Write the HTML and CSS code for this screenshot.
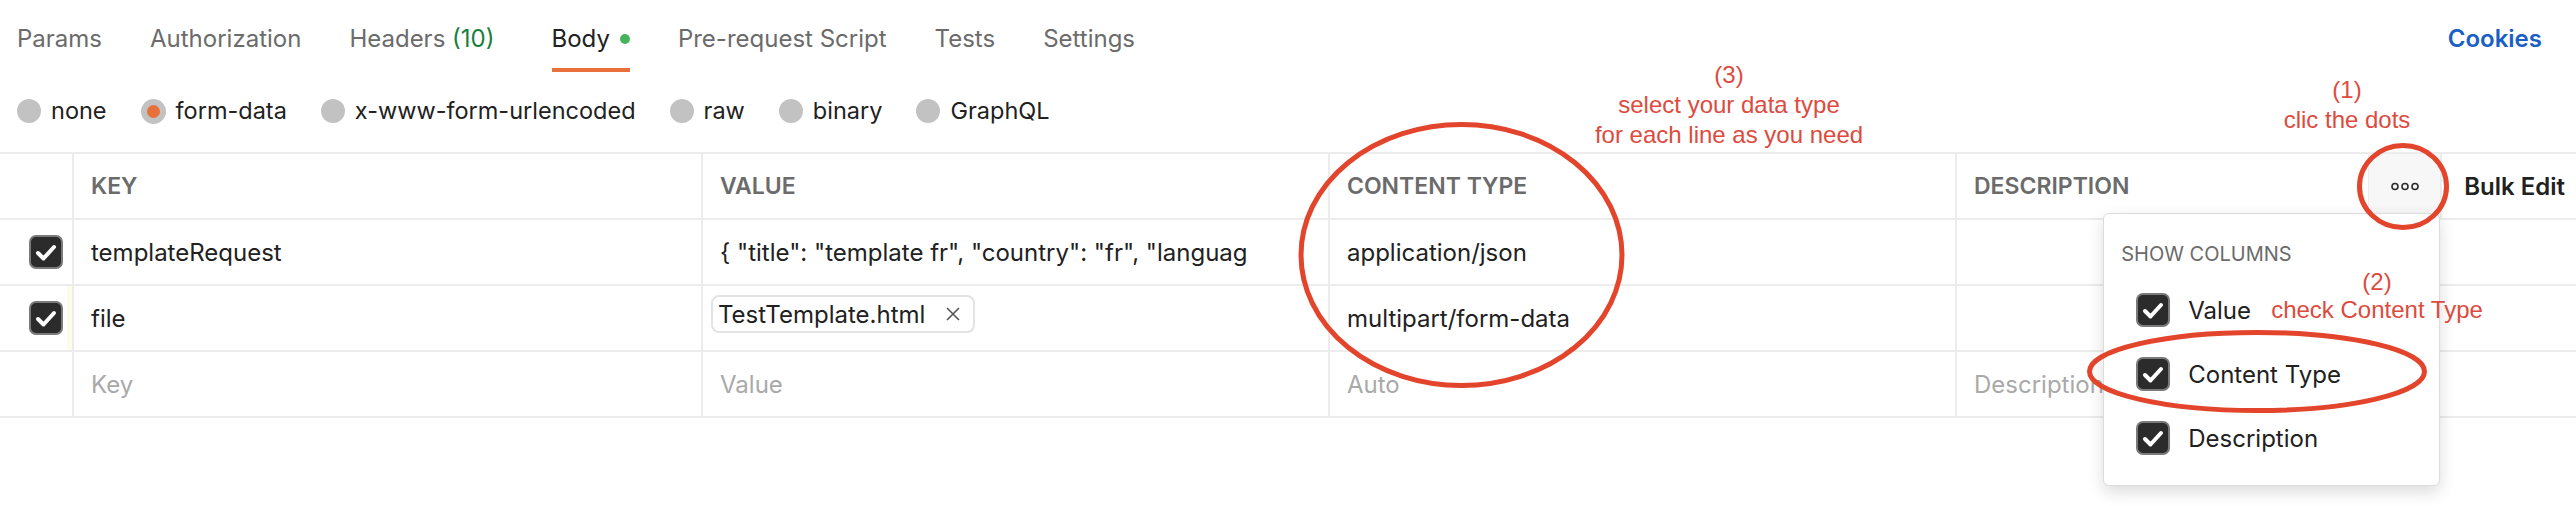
FILE: index.html
```html
<!DOCTYPE html>
<html>
<head>
  <meta charset="utf-8">
  <link rel="stylesheet" href="styles.css">
</head>
<body>
  <div class="pane">
    <div class="tabs">
      <div class="tab-list">
        <div class="tab">Params</div>
        <div class="tab">Authorization</div>
        <div class="tab">Headers <span class="count">(10)</span></div>
        <div class="tab active">Body<span class="dot"></span></div>
        <div class="tab">Pre-request Script</div>
        <div class="tab">Tests</div>
        <div class="tab">Settings</div>
      </div>
      <div class="cookies">Cookies</div>
    </div>

    <div class="body-types">
      <label class="radio"><span class="radio-mark"></span>none</label>
      <label class="radio"><span class="radio-mark checked"></span>form-data</label>
      <label class="radio"><span class="radio-mark"></span>x-www-form-urlencoded</label>
      <label class="radio"><span class="radio-mark"></span>raw</label>
      <label class="radio"><span class="radio-mark"></span>binary</label>
      <label class="radio"><span class="radio-mark"></span>GraphQL</label>
    </div>

    <div class="kv-table">
      <div class="kv-row kv-head">
        <div class="cell cell-check"></div>
        <div class="cell">KEY</div>
        <div class="cell">VALUE</div>
        <div class="cell">CONTENT TYPE</div>
        <div class="cell cell-desc">
          <span class="desc-label">DESCRIPTION</span>
          <div class="more-btn">
            <svg width="28" height="9" viewBox="0 0 28 9">
              <circle cx="4" cy="4.5" r="3" fill="none" stroke="#2b2b2b" stroke-width="1.6"/>
              <circle cx="14" cy="4.5" r="3" fill="none" stroke="#2b2b2b" stroke-width="1.6"/>
              <circle cx="24" cy="4.5" r="3" fill="none" stroke="#2b2b2b" stroke-width="1.6"/>
            </svg>
            <div class="col-menu">
              <div class="menu-title">SHOW COLUMNS</div>
              <div class="menu-item">
                <span class="check"><svg width="30" height="30" viewBox="0 0 30 30"><path d="M7 16 L12.5 21.5 L23 10" fill="none" stroke="#fff" stroke-width="4" stroke-linecap="round" stroke-linejoin="round"/></svg></span>
                Value
              </div>
              <div class="menu-item">
                <span class="check"><svg width="30" height="30" viewBox="0 0 30 30"><path d="M7 16 L12.5 21.5 L23 10" fill="none" stroke="#fff" stroke-width="4" stroke-linecap="round" stroke-linejoin="round"/></svg></span>
                Content Type
              </div>
              <div class="menu-item">
                <span class="check"><svg width="30" height="30" viewBox="0 0 30 30"><path d="M7 16 L12.5 21.5 L23 10" fill="none" stroke="#fff" stroke-width="4" stroke-linecap="round" stroke-linejoin="round"/></svg></span>
                Description
              </div>
            </div>
          </div>
          <div class="bulk-edit">Bulk Edit</div>
        </div>
      </div>

      <div class="kv-row">
        <div class="cell cell-check">
          <span class="check"><svg width="30" height="30" viewBox="0 0 30 30"><path d="M7 16 L12.5 21.5 L23 10" fill="none" stroke="#fff" stroke-width="4" stroke-linecap="round" stroke-linejoin="round"/></svg></span>
        </div>
        <div class="cell">templateRequest</div>
        <div class="cell">{ "title": "template fr", "country": "fr", "languag</div>
        <div class="cell">application/json</div>
        <div class="cell"></div>
      </div>

      <div class="kv-row">
        <div class="cell cell-check edited">
          <span class="check"><svg width="30" height="30" viewBox="0 0 30 30"><path d="M7 16 L12.5 21.5 L23 10" fill="none" stroke="#fff" stroke-width="4" stroke-linecap="round" stroke-linejoin="round"/></svg></span>
        </div>
        <div class="cell">file</div>
        <div class="cell cell-file">
          <span class="file-chip">TestTemplate.html
            <svg width="16" height="16" viewBox="0 0 16 16"><path d="M2 2 L14 14 M14 2 L2 14" stroke="#555" stroke-width="1.6"/></svg>
          </span>
        </div>
        <div class="cell">multipart/form-data</div>
        <div class="cell"></div>
      </div>

      <div class="kv-row">
        <div class="cell cell-check"></div>
        <div class="cell placeholder">Key</div>
        <div class="cell placeholder">Value</div>
        <div class="cell placeholder">Auto</div>
        <div class="cell placeholder">Description</div>
      </div>
    </div>

    <!-- hand-drawn notes on top of the screenshot -->
    <svg class="marks" width="2576" height="506" viewBox="0 0 2576 506">
      <ellipse cx="1461.5" cy="255" rx="160.5" ry="130.5"/>
      <ellipse cx="2403" cy="186.5" rx="43.5" ry="41"/>
      <ellipse cx="2257" cy="371.5" rx="167.5" ry="39"/>
    </svg>
    <div class="note note-types">(3)<br>select your data type<br>for each line as you need</div>
    <div class="note note-dots">(1)<br>clic the dots</div>
    <div class="note note-check">(2)<br>check Content Type</div>
  </div>
</body>
</html>
```

FILE: styles.css
```css
body {
  margin: 0;
  font-family: Inter, "Noto Sans", sans-serif;
  color: #212121;
  background: #ffffff;
}

.pane {
  position: relative;
  width: 2576px;
  height: 506px;
  overflow: hidden;
}

/* Tabs */
.tabs {
  display: flex;
  justify-content: space-between;
  height: 72px;
  padding: 0 34px 0 17px;
}

.tab-list {
  display: flex;
  gap: 48px;
}

.tab {
  box-sizing: border-box;
  height: 72px;
  padding-top: 24px;
  font-size: 24px;
  line-height: 30px;
  color: #6b6b6b;
  white-space: nowrap;
  border-bottom: 4px solid transparent;
}

.tab.active {
  color: #212121;
  border-bottom-color: #e8703a;
  margin-left: 9px;
}

.count {
  color: #17803d;
}

.dot {
  display: inline-block;
  width: 10px;
  height: 10px;
  margin-left: 10px;
  border-radius: 50%;
  background: #47b35c;
  vertical-align: 3px;
}

.cookies {
  padding-top: 24px;
  font-size: 24px;
  line-height: 30px;
  font-weight: 600;
  color: #1a5fc6;
}

/* Body type radios */
.body-types {
  box-sizing: border-box;
  display: flex;
  align-items: center;
  gap: 34px;
  height: 80px;
  padding: 0 0 2px 17px;
}

.radio {
  display: flex;
  align-items: center;
  gap: 10px;
  font-size: 23.5px;
  line-height: 30px;
}

.radio-mark {
  width: 24px;
  height: 24px;
  border-radius: 50%;
  background: #c2c2c2;
}

.radio-mark.checked {
  box-sizing: border-box;
  width: 25px;
  height: 25px;
  border: 6px solid #c2c2c2;
  background: #e8703a;
}

/* Key / value table */
.kv-row {
  box-sizing: border-box;
  display: grid;
  grid-template-columns: 72px 629px 627px 627px 1fr;
  height: 66px;
  border-top: 2px solid #ececec;
}

.kv-row:last-child {
  height: 68px;
  border-bottom: 2px solid #ececec;
}

.cell {
  display: flex;
  align-items: center;
  min-width: 0;
  padding: 0 17px;
  border-left: 2px solid #ececec;
  font-size: 24px;
  white-space: nowrap;
  overflow: hidden;
}

.cell-check {
  border-left: none;
  justify-content: flex-end;
  padding: 0 9px 0 0;
}

.cell-check.edited {
  box-shadow: inset -5px 0 0 #fcfce8;
}

.kv-head .cell {
  font-size: 23px;
  font-weight: 600;
  color: #6b6b6b;
}

.placeholder {
  color: #a9a9a9;
}

.check {
  box-sizing: border-box;
  display: flex;
  align-items: center;
  justify-content: center;
  width: 34px;
  height: 34px;
  flex-shrink: 0;
  border: 2px solid #7a7a7a;
  border-radius: 7px;
  background: #2b2b2b;
}

.cell-file {
  padding-left: 8px;
}

.file-chip {
  box-sizing: border-box;
  display: flex;
  align-items: center;
  gap: 20px;
  height: 38px;
  margin-top: -8px;
  padding: 0 12px 0 5px;
  border: 2px solid #e3e3e3;
  border-radius: 8px;
}

.cell-desc {
  padding-right: 0;
  overflow: visible;
}

.desc-label {
  flex: 1;
}

.more-btn {
  position: relative;
  box-sizing: border-box;
  align-self: stretch;
  display: flex;
  align-items: center;
  justify-content: center;
  width: 72px;
  background: #f7f7f7;
  border-left: 1px solid #ececec;
}

.kv-head .bulk-edit {
  align-self: stretch;
  display: flex;
  align-items: center;
  padding: 0 11px 0 22px;
  border-left: 2px solid #ececec;
  font-size: 24px;
  color: #212121;
}

/* Show columns menu */
.col-menu {
  position: absolute;
  top: 59px;
  right: 0;
  z-index: 10;
  box-sizing: border-box;
  width: 337px;
  padding: 28px 0 30px 17px;
  background: #ffffff;
  border: 1px solid #dcdcdc;
  border-radius: 6px;
  box-shadow: 0 6px 16px rgba(0, 0, 0, 0.14);
  font-weight: 400;
  color: #212121;
  text-align: left;
}

.menu-title {
  font-size: 20px;
  line-height: 24px;
  color: #6b6b6b;
  margin-bottom: 27px;
}

.menu-item {
  display: flex;
  align-items: center;
  gap: 18px;
  height: 34px;
  margin-left: 15px;
  font-size: 24px;
}

.menu-item + .menu-item {
  margin-top: 30px;
}

/* Annotations */
.marks {
  position: absolute;
  top: 0;
  left: 0;
  z-index: 20;
  pointer-events: none;
}

.marks ellipse {
  fill: none;
  stroke: #e2452b;
  stroke-width: 5;
}

.note {
  position: absolute;
  z-index: 21;
  font-family: "Liberation Sans", Arial, sans-serif;
  font-size: 24px;
  line-height: 30px;
  color: #dd4b3e;
  text-align: center;
  white-space: nowrap;
}

.note-types {
  left: 1569px;
  top: 60px;
  width: 320px;
}

.note-dots {
  left: 2247px;
  top: 75px;
  width: 200px;
}

.note-check {
  left: 2267px;
  top: 268px;
  width: 220px;
  line-height: 28px;
}
```
